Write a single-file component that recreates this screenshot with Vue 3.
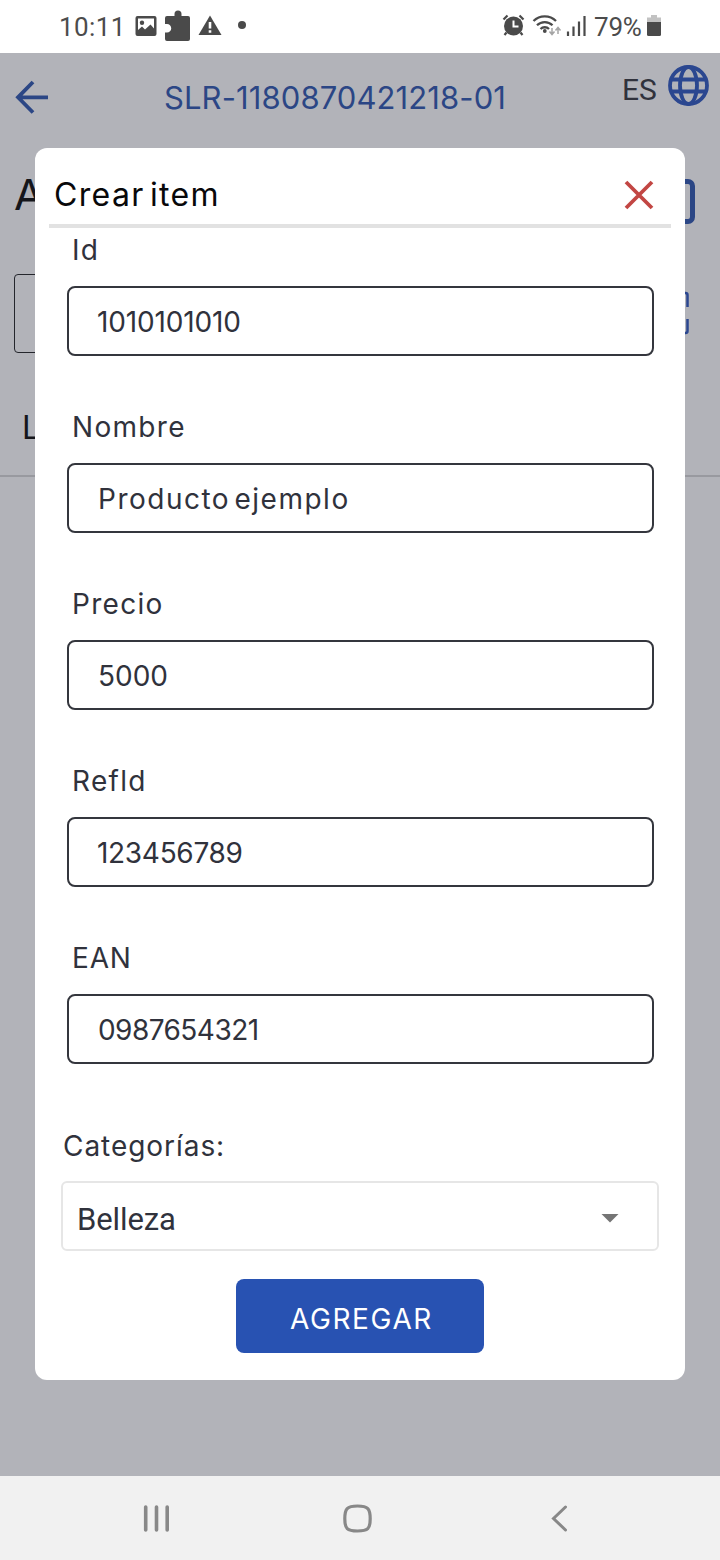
<script setup>
const fields = [
  { label: 'Id', value: '1010101010', cls: 'id' },
  { label: 'Nombre', value: 'Producto ejemplo', cls: 'nombre' },
  { label: 'Precio', value: '5000', cls: 'precio' },
  { label: 'Refld', value: '123456789', cls: 'ref' },
  { label: 'EAN', value: '0987654321', cls: 'ean' },
]
</script>

<template>
  <div class="screen">
    <div class="status">
      <span class="clock">10:11</span>
      <svg class="notif" width="116" height="36" viewBox="132 8 116 36" fill="#4a4a4a">
        <path fill-rule="evenodd" d="M137.500 16h17q2 0 2 2v16q0 2-2 2h-17q-2 0-2-2V18q0-2 2-2zM138 18.500v11.500l4-3.500 3 3 5.500-5 3.500 4V18.500z" />
        <circle cx="142" cy="22.800" r="2.200" />
        <path d="M167 16h7.500v-2a3.500 3.500 0 0 1 7 0v2h6.500q2 0 2 2v21q0 2-2 2h-21q-2 0-2-2v-6.500h2a4.200 4.200 0 0 0 0-8.500h-2V18q0-2 2-2z" />
        <path d="M210 15.500L221.500 35h-23z" />
        <path d="M208.700 22h2.600v6.500h-2.600zM208.700 30.200h2.600v2.600h-2.600z" fill="#fff" />
        <circle cx="242" cy="25" r="4" />
      </svg>
      <svg class="radio" width="90" height="36" viewBox="500 8 90 36" fill="none" stroke="#4a4a4a">
        <circle cx="513.500" cy="26" r="9.500" fill="#4a4a4a" stroke="none" />
        <path d="M503.500 19.500l4-4M519.500 15.500l4 4M506.500 32.500l-2 2.500M520.500 32.500l2 2.500" stroke-width="2.200" />
        <path d="M513.500 20.500v6h5" stroke="#fff" stroke-width="2" />
        <path d="M533.500 21a16 16 0 0 1 22.500 0M537 25.300a11 11 0 0 1 15.500 0M540.500 29a6 6 0 0 1 8.500 0" stroke-width="2.300" />
        <circle cx="544.800" cy="31" r="1.900" fill="#4a4a4a" stroke="none" />
        <path d="M552 28v6M549.500 31.500l2.500 3 2.500-3M558 34v-6M555.500 30.500l2.500-3 2.500 3" stroke="#a5a5a5" stroke-width="1.500" />
        <path d="M568 31.500V36M573.500 26.500V36M579 21.500V36M584.500 16V36" stroke-width="2.200" />
      </svg>
      <span class="percent">79%</span>
      <svg class="battery" width="16" height="36" viewBox="646 8 16 36">
        <path d="M651 15h6v2.500h4V22h-14v-4.500h4z" fill="#c2c2c2" />
        <path d="M647 22h14v12.500q0 1.500-1.500 1.500h-11q-1.500 0-1.500-1.500z" fill="#4a4a4a" />
      </svg>
    </div>

    <main class="app">
      <header class="topbar">
        <svg class="back" width="36" height="36" viewBox="14 79 36 36" fill="none" stroke="#2b4685" stroke-width="3.800">
          <path d="M33 82L18 97.300 33 112.500M18 97.300h30" />
        </svg>
        <span class="order">SLR-1180870421218-01</span>
        <span class="lang">ES</span>
        <svg class="globe" width="42" height="42" viewBox="0 0 42 42" fill="none" stroke="#2b4790" stroke-width="3.800">
          <circle cx="20.500" cy="20.500" r="18.500" />
          <ellipse cx="20.500" cy="20.500" rx="8.500" ry="18.500" />
          <path d="M4 14.500h33M4 26.500h33" />
        </svg>
      </header>
      <div class="heading"><span>A</span><i class="frame"></i></div>
      <div class="search">
        <i class="search-box"></i>
        <svg class="scan" width="24" height="46" viewBox="0 0 24 46" fill="none" stroke="#2b4790" stroke-width="2.500">
          <path d="M14 3h6.500q2 0 2 2v12M14 43h6.500q2 0 2-2V29" />
        </svg>
      </div>
      <div class="list-head">L</div>

      <section class="modal">
        <div class="modal-head">
          <h1>Crear item</h1>
          <svg width="30" height="30" viewBox="0 0 30 30" fill="none" stroke="#c24643" stroke-width="3.800">
            <path d="M2 2L28 28M28 2L2 28" />
          </svg>
        </div>
        <div class="fields">
          <div v-for="f in fields" :key="f.label" class="field" :class="f.cls">
            <label><span>{{ f.label }}</span></label>
            <div class="input"><span>{{ f.value }}</span></div>
          </div>
        </div>
        <div class="category"><span>Categorías:</span></div>
        <div class="select">
          <span>Belleza</span>
          <svg width="18" height="9" viewBox="0 0 18 9"><path d="M.5 0h17L9 8.500z" fill="#757575" /></svg>
        </div>
        <button class="submit"><span>AGREGAR</span></button>
      </section>
    </main>

    <nav class="navbar">
      <svg width="720" height="84" viewBox="0 1476 720 84" fill="none" stroke="#888" stroke-width="3.600" stroke-linecap="round">
        <path d="M145.700 1507v23M156.500 1507v23M167.200 1507v23" />
        <path d="M357.500 1506c10.500 0 12.700 2.500 12.700 12.700s-2.200 12.300-12.700 12.300-12.700-2.200-12.700-12.300 2.200-12.700 12.700-12.700z" stroke-width="3.200" />
        <path d="M565.500 1507L553.500 1518.500 565.500 1530" stroke-width="3" />
      </svg>
    </nav>
  </div>
</template>

<style>
body {
  margin: 0;
}
</style>

<style scoped>
.screen {
  width: 720px;
  height: 1560px;
  display: flex;
  flex-direction: column;
  overflow: hidden;
  background: #fff;
  color: #30323c;
  font-family: Inter, "Liberation Sans", sans-serif;
}
svg {
  display: block;
  flex: none;
}
span {
  white-space: nowrap;
}
.status {
  height: 53px;
  display: flex;
  align-items: flex-start;
  box-sizing: border-box;
  padding: 8px 0 0 59px;
  font: 27px/36px Roboto, sans-serif;
  color: #4c4c4c;
}
.clock {
  width: 73px;
  padding-top: 1px;
  font-size: 26px;
  letter-spacing: 0.4px;
}
.radio {
  margin-left: 252px;
}
.percent {
  width: 52px;
  padding-top: 1px;
  margin-left: 4px;
  font-size: 26px;
  letter-spacing: -0.2px;
}
.app {
  position: relative;
  height: 1423px;
  background: #b2b3b9;
}
.topbar {
  height: 95px;
  display: flex;
  align-items: flex-start;
}
.back {
  margin: 26px 0 0 14px;
}
.order {
  width: 342px;
  margin: 25px 0 0 114px;
  font-size: 31px;
  line-height: 40px;
  letter-spacing: 0.1px;
  color: #2b4685;
}
.lang {
  width: 46px;
  margin: 17px 0 0 116px;
  font: 30px/40px Roboto, sans-serif;
}
.globe {
  margin-top: 12px;
}
.heading {
  height: 126px;
  display: flex;
  align-items: flex-start;
  justify-content: space-between;
  padding: 0 25px 0 14px;
  color: #15161b;
  font-size: 43px;
  line-height: 52px;
}
.heading span {
  margin-top: 20px;
}
.frame {
  width: 44px;
  height: 45px;
  box-sizing: border-box;
  margin-top: 31px;
  border: 5px solid #2b4685;
  border-radius: 7px;
}
.search {
  height: 126px;
  display: flex;
  align-items: flex-start;
  justify-content: space-between;
  padding: 0 31px 0 14px;
}
.search-box {
  width: 560px;
  height: 79px;
  box-sizing: border-box;
  border: 1.500px solid #24262c;
  border-radius: 4px;
}
.scan {
  margin-top: 16px;
}
.list-head {
  height: 75px;
  border-bottom: 2px solid #98999f;
  padding-left: 22px;
  color: #15161b;
  font-size: 32px;
  line-height: 56px;
}
.modal {
  position: absolute;
  left: 35px;
  top: 95px;
  width: 650px;
  height: 1232px;
  background: #fff;
  border-radius: 12px;
}
.modal-head {
  height: 76px;
  margin: 0 14px;
  padding: 0 17px 0 5px;
  display: flex;
  align-items: flex-start;
  justify-content: space-between;
  border-bottom: 4px solid #e2e2e2;
}
.modal-head h1 {
  margin: 27px 0 0;
  font-weight: 400;
  font-size: 32px;
  line-height: 40px;
  letter-spacing: 1.35px;
  word-spacing: -5px;
  color: #08080a;
}
.modal-head svg {
  margin-top: 32px;
}
.fields {
  margin: 4px 31px 0 32px;
  display: grid;
  gap: 53px;
  font-size: 28px;
}
.field label {
  display: block;
  height: 36px;
  line-height: 36px;
  margin: 0 0 18px 5px;
  letter-spacing: 1.300px;
}
.ean label {
  letter-spacing: 0.800px;
}
.input {
  height: 70px;
  box-sizing: border-box;
  border: 2px solid #34363d;
  border-radius: 8px;
  padding-left: 28px;
  line-height: 69px;
}
.id .input {
  letter-spacing: -0.150px;
}
.nombre .input {
  padding-left: 29px;
  letter-spacing: 1.500px;
  word-spacing: -5px;
}
.precio .input {
  padding-left: 29px;
}
.ref .input {
  letter-spacing: -0.300px;
}
.ean .input {
  padding-left: 29px;
  letter-spacing: -0.550px;
}
.category {
  margin: 64px 0 17px 28px;
  font-size: 28px;
  line-height: 36px;
  letter-spacing: 0.950px;
}
.select {
  height: 70px;
  box-sizing: border-box;
  margin: 0 26px;
  padding: 4px 38px 0 14px;
  border: 2px solid #e6e6e6;
  border-radius: 6px;
  display: flex;
  align-items: center;
  justify-content: space-between;
  font: 31px/40px Roboto, sans-serif;
  letter-spacing: -0.1px;
}
.select span {
  padding-top: 4px;
}
.submit {
  display: block;
  width: 248px;
  height: 74px;
  margin: 28px auto 0;
  padding: 5px 0 0 3px;
  border: 0;
  border-radius: 8px;
  background: #2852b2;
  color: #fff;
  font: 28px/36px Inter, sans-serif;
  letter-spacing: 1.600px;
}
.navbar {
  height: 84px;
  background: #f1f1f1;
}
</style>
